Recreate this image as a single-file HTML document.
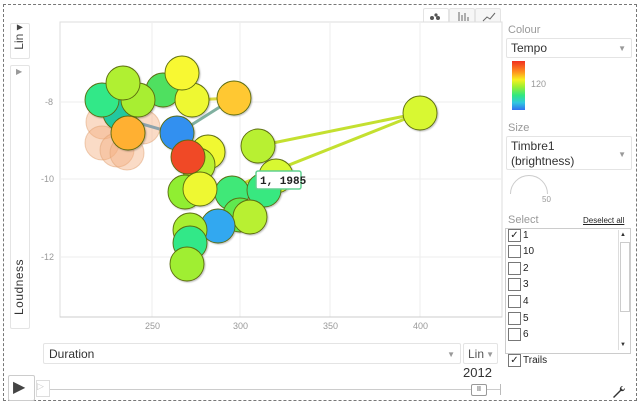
<!DOCTYPE html>
<html><head><meta charset="utf-8"><style>
body{margin:0;width:640px;height:402px;background:#fff;font-family:"Liberation Sans",sans-serif;position:relative;overflow:hidden}
.abs{position:absolute}
.box{position:absolute;border:1px solid #e4e4e4;border-radius:2px;background:#fff}
.lab{color:#999;font-size:11px}
.dd{font-size:12px;color:#333}
.arr{position:absolute;color:#999;font-size:8px}
.cb{display:inline-block;width:11px;height:11px;border:1px solid #777;vertical-align:middle;margin-right:2px;background:#fff;font-size:10px;line-height:11px;text-align:center}
.row{position:absolute;left:508px;font-size:10px;color:#222;height:16px;line-height:16px}
</style></head><body>
<div class="abs" style="left:3px;top:4px;width:632px;height:395px;border:1px dashed #777"></div>
<div class="box" style="left:10px;top:23px;width:18px;height:34px"></div>
<div class="abs" style="left:5px;top:30px;width:28px;transform:rotate(-90deg);font-size:12px;color:#444;text-align:center">Lin ▾</div>
<div class="box" style="left:10px;top:65px;width:18px;height:262px"></div>
<div class="arr" style="left:16px;top:67px">▶</div>
<div class="abs" style="left:-13px;top:280px;width:64px;transform:rotate(-90deg);font-size:12px;color:#333;text-align:center;letter-spacing:0.5px">Loudness</div>
<div class="box" style="left:423px;top:8px;width:24px;height:14px;border-bottom:none"></div>
<div class="box" style="left:449px;top:8px;width:24px;height:14px;border-bottom:none;background:#f6f6f6"></div>
<div class="box" style="left:475px;top:8px;width:24px;height:14px;border-bottom:none;background:#f6f6f6"></div>
<svg class="abs" style="left:423px;top:8px" width="80" height="16">
<circle cx="9" cy="10" r="2" fill="#555"/><circle cx="13" cy="7" r="1.6" fill="#555"/><circle cx="15" cy="10" r="2" fill="#555"/>
<path d="M36 4v9M39 7v6M42 5v8M45 9v4" stroke="#666" stroke-width="1"/>
<path d="M60 13l4-4 3 2 5-6" stroke="#666" fill="none"/>
</svg>
<svg class="abs" style="left:0;top:0" width="640" height="402">
<defs><filter id="sh" x="-20%" y="-20%" width="150%" height="150%"><feDropShadow dx="1" dy="1" stdDeviation="0.8" flood-opacity="0.25"/></filter></defs>
<rect x="60" y="22" width="442" height="295" fill="#fff" stroke="#ddd"/>
<g stroke="#eee"><line x1="152" y1="22" x2="152" y2="317"/><line x1="240" y1="22" x2="240" y2="317"/><line x1="330" y1="22" x2="330" y2="317"/><line x1="420" y1="22" x2="420" y2="317"/>
<line x1="60" y1="102" x2="502" y2="102"/><line x1="60" y1="179" x2="502" y2="179"/><line x1="60" y1="257" x2="502" y2="257"/></g>
<line x1="60" y1="317" x2="502" y2="317" stroke="#ccc"/>
<g font-size="9" fill="#999" font-family="Liberation Sans"><text x="45" y="105">-8</text><text x="41" y="182">-10</text><text x="41" y="260">-12</text>
<text x="145" y="329">250</text><text x="233" y="329">300</text><text x="323" y="329">350</text><text x="413" y="329">400</text></g>
<g stroke="#c4e030" stroke-width="3"><line x1="420" y1="113" x2="258" y2="146"/><line x1="420" y1="113" x2="236" y2="186"/></g>
<line x1="128" y1="120" x2="177" y2="134" stroke="#3a9ad0" stroke-width="3"/>
<line x1="177" y1="134" x2="234" y2="98" stroke="#80b0a0" stroke-width="3"/>
<line x1="192" y1="100" x2="234" y2="98" stroke="#d8d840" stroke-width="3"/>
<g fill-opacity="0.45" fill="#f5b080" stroke="#e0a070" stroke-opacity="0.5">
<circle cx="103" cy="122" r="17"/><circle cx="143" cy="127" r="17"/><circle cx="102" cy="143" r="17"/><circle cx="117" cy="150" r="17"/><circle cx="127" cy="153" r="17"/></g>
<g stroke="#5a6a10" stroke-width="0.9" filter="url(#sh)">
<circle cx="120" cy="113" r="17" fill="#20c8a0"/>
<circle cx="102" cy="100" r="17" fill="#30e888"/>
<circle cx="163" cy="90" r="17" fill="#50e060"/>
<circle cx="138" cy="100" r="17" fill="#a8ee30"/>
<circle cx="123" cy="83" r="17" fill="#b0f030"/>
<circle cx="192" cy="100" r="17" fill="#eef830"/>
<circle cx="182" cy="73" r="17" fill="#f8f830"/>
<circle cx="234" cy="98" r="17" fill="#ffc830"/>
<circle cx="128" cy="133" r="17" fill="#ffb030"/>
<circle cx="208" cy="152" r="17" fill="#f0f830"/>
<circle cx="198" cy="165" r="17" fill="#b8f030"/>
<circle cx="177" cy="133" r="17" fill="#3090f0"/>
<circle cx="188" cy="157" r="17" fill="#f04828"/>
<circle cx="258" cy="146" r="17" fill="#b8f030"/>
<circle cx="276" cy="176" r="17" fill="#d8f830"/>
<circle cx="185" cy="192" r="17" fill="#90ee30"/>
<circle cx="232" cy="193" r="17" fill="#40e878"/>
<circle cx="264" cy="190" r="17" fill="#38e880"/>
<circle cx="200" cy="189" r="17" fill="#eef830"/>
<circle cx="240" cy="215" r="17" fill="#60e850"/>
<circle cx="250" cy="217" r="17" fill="#b8f030"/>
<circle cx="218" cy="226" r="17" fill="#30a8f0"/>
<circle cx="190" cy="230" r="17" fill="#a8ee30"/>
<circle cx="190" cy="243" r="17" fill="#30e888"/>
<circle cx="187" cy="264" r="17" fill="#a0ee30"/>
<circle cx="420" cy="113" r="17" fill="#d8f830"/>
</g>
<rect x="256" y="171" width="45" height="18" rx="2" fill="#fff" stroke="#60d090" stroke-width="1.5"/>
<text x="260" y="184" font-size="11" font-weight="bold" font-family="Liberation Mono" fill="#222">1, 1985</text>
</svg>
<div class="abs lab" style="left:508px;top:24px">Colour</div>
<div class="box" style="left:506px;top:38px;width:124px;height:18px"><span class="dd abs" style="left:4px;top:2px">Tempo</span><span class="arr" style="right:5px;top:5px">▼</span></div>
<div class="abs" style="left:512px;top:61px;width:13px;height:49px;background:linear-gradient(#f03020,#ff9020 22%,#f8f020 38%,#a0f030 52%,#30e880 70%,#30c8e0 85%,#3070f0)"></div>
<div class="abs" style="left:531px;top:79px;font-size:9px;color:#999">120</div>
<div class="abs lab" style="left:508px;top:122px">Size</div>
<div class="box" style="left:506px;top:136px;width:124px;height:32px"><span class="dd abs" style="left:4px;top:2px;line-height:15px">Timbre1<br>(brightness)</span><span class="arr" style="right:5px;top:13px">▼</span></div>
<div class="abs" style="left:510px;top:175px;width:36px;height:36px;border:1px solid #ccc;border-radius:50%;clip-path:inset(0 0 50% 0)"></div>
<div class="abs" style="left:542px;top:195px;font-size:8px;color:#999">50</div>
<div class="abs lab" style="left:508px;top:214px">Select</div>
<div class="abs" style="left:583px;top:216px;font-size:8px;color:#222;text-decoration:underline">Deselect all</div>
<div class="abs" style="left:505px;top:228px;width:124px;height:124px;border:1px solid #ccc;overflow:hidden"></div>
<div class="abs" style="left:618px;top:230px;width:11px;height:120px;border-left:1px solid #ddd"></div>
<div class="abs" style="left:620px;top:242px;width:8px;height:68px;border:1px solid #ccc"></div>
<div class="arr" style="left:620px;top:232px;color:#333;font-size:6px">▲</div>
<div class="arr" style="left:620px;top:342px;color:#333;font-size:6px">▼</div>
<div class="row" style="top:228px"><span class="cb">✓</span>1</div>
<div class="row" style="top:244px"><span class="cb"></span>10</div>
<div class="row" style="top:261px"><span class="cb"></span>2</div>
<div class="row" style="top:277px"><span class="cb"></span>3</div>
<div class="row" style="top:294px"><span class="cb"></span>4</div>
<div class="row" style="top:311px"><span class="cb"></span>5</div>
<div class="row" style="top:327px"><span class="cb"></span>6</div>
<div class="row" style="top:353px;font-size:10px"><span class="cb">✓</span>Trails</div>
<div class="box" style="left:43px;top:343px;width:416px;height:19px"><span class="dd abs" style="left:5px;top:3px">Duration</span><span class="arr" style="right:5px;top:6px">▼</span></div>
<div class="box" style="left:463px;top:343px;width:33px;height:19px"><span class="dd abs" style="left:4px;top:3px;color:#555">Lin</span><span class="arr" style="right:3px;top:6px">▼</span></div>
<div class="abs" style="left:463px;top:365px;font-size:13px;color:#333">2012</div>
<div class="box" style="left:8px;top:375px;width:25px;height:24px;border-color:#ccc"></div>
<div class="abs" style="left:13px;top:377px;font-size:16px;color:#444">▶</div>
<div class="abs" style="left:36px;top:380px;width:12px;height:15px;border:1px solid #ddd;color:#ccc;font-size:9px">▷</div>
<div class="abs" style="left:50px;top:389px;width:450px;height:1px;background:#ccc"></div>
<div class="abs" style="left:500px;top:384px;width:1px;height:11px;background:#bbb"></div>
<div class="box" style="left:471px;top:384px;width:14px;height:10px;border-color:#999;font-size:7px;text-align:center;line-height:10px;color:#333">II</div>
<svg class="abs" style="left:610px;top:383px" width="16" height="16"><path d="M3 14l7-7a3 3 0 0 1 3-4l-2 2 2 2 2-2a3 3 0 0 1-4 3l-7 7z" fill="#333"/></svg>
</body></html>
